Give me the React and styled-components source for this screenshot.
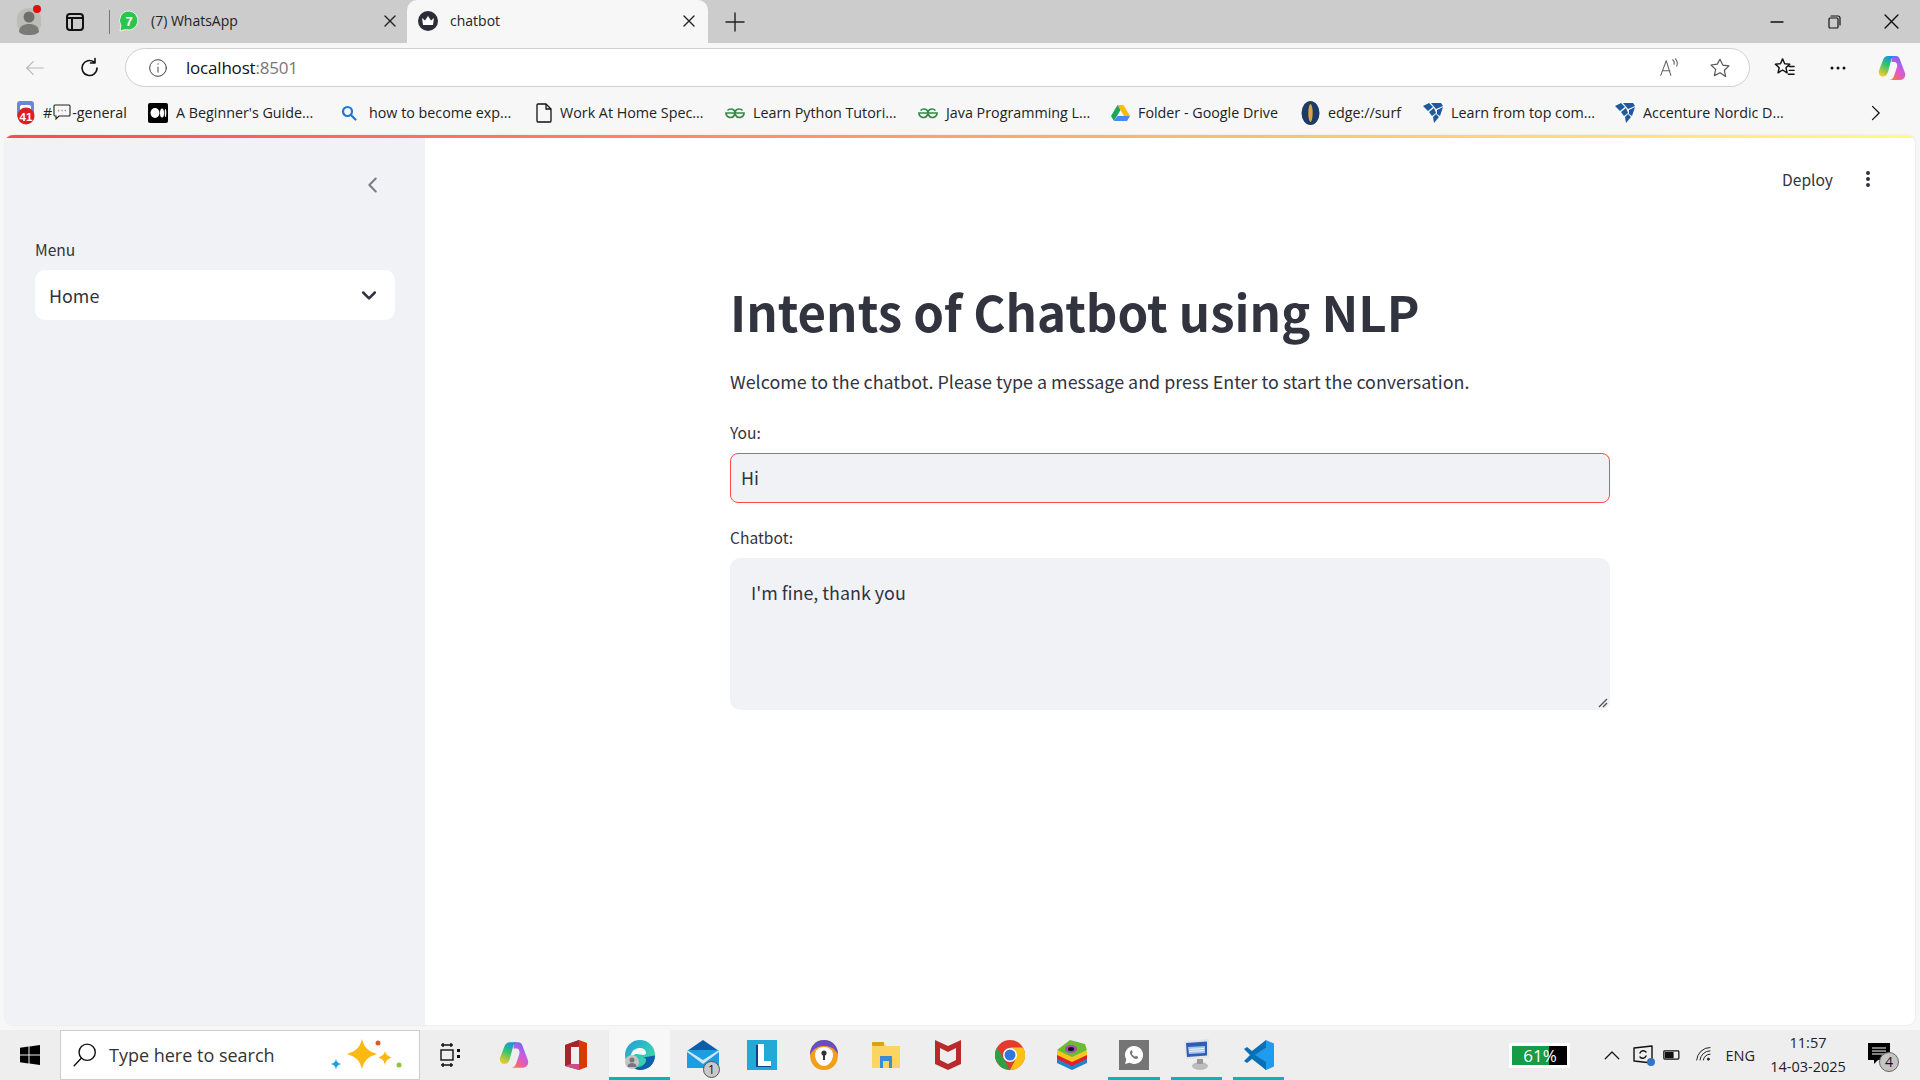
import React from 'react';
import styled, { createGlobalStyle } from 'styled-components';

const Global = createGlobalStyle`
  html, body { margin: 0; padding: 0; width: 1920px; height: 1080px; overflow: hidden; background: #f7f7f7; }
  * { box-sizing: border-box; }
`;
const UI = '"Open Sans", "Noto Sans", sans-serif';
const ST = '"Noto Sans CJK SC", "Noto Sans", sans-serif';

const Page = styled.div`
  width: 1920px; height: 1080px; display: flex; flex-direction: column; background: #f7f7f7; font-family: ${UI};
`;
const TitleBar = styled.div`
  height: 43px; flex: none; background: #cccccc; display: flex; align-items: stretch; padding-left: 17px;
`;
const ProfileSlot = styled.div`
  position: relative; width: 24px; display: flex; align-items: center; margin-top: -2px;
`;
const RedDot = styled.span`
  position: absolute; left: 16px; top: 7px; width: 8px; height: 8px; border-radius: 50%; background: #e30f0f;
`;
const TabsIcon = styled.div`
  width: 24px; margin-left: 22px; display: flex; align-items: center; justify-content: center;
`;
const TabDivider = styled.div`
  width: 1px; height: 24px; align-self: center; background: #777; margin-left: 22px;
`;
const Tab = styled.div`
  width: ${p => p.$w}px; height: 43px; display: flex; align-items: center;
  padding: 0 ${p => p.$pr}px 2px ${p => p.$pl}px; font-size: 14px; color: #222; gap: ${p => p.$gap}px;
  background: ${p => (p.$active ? '#f7f7f7' : 'transparent')};
  border-radius: ${p => (p.$active ? '10px 10px 0 0' : '0')};
`;
const TabLabel = styled.span` flex: 1; white-space: nowrap; `;
const PlusSlot = styled.div`
  margin-left: 15px; width: 24px; display: flex; align-items: center; justify-content: center;
`;
const WinControls = styled.div`
  margin-left: auto; display: flex; align-items: center; padding-right: 21px; gap: 43px;
`;
const Toolbar = styled.div`
  height: 45px; flex: none; display: flex; align-items: center; padding: 4px 14px 0 24px; background: #f7f7f7;
`;
const NavIcon = styled.div`
  width: ${p => p.$w}px; margin-left: ${p => p.$ml || 0}px; display: flex; justify-content: center; align-items: center;
`;
const Address = styled.div`
  width: 1625px; height: 39px; margin-left: 23px; flex: none; border: 1.5px solid #d0d0d0; border-radius: 20px;
  background: #fff; display: flex; align-items: center; padding: 0 18px 0 22px;
`;
const Url = styled.span`
  font-size: 17px; color: #111; margin-left: 18px; letter-spacing: -0.2px;
  & > span { color: #777; }
`;
const AddrRight = styled.div`
  margin-left: auto; display: flex; align-items: center; gap: 29px;
`;
const Bookmarks = styled.div`
  height: 47px; flex: none; display: flex; align-items: center; padding: 2px 0 0 16px; background: #f7f7f7;
`;
const Bookmark = styled.div`
  width: ${p => p.$w}px; flex: none; display: flex; align-items: center; gap: ${p => p.$gap || 8}px;
  font-size: 14.3px; color: #222; white-space: nowrap;
`;
const Inline = styled.span` display: inline-flex; align-items: center; gap: 1px; `;
const BmChevron = styled.div`
  margin-left: auto; margin-right: 35px; display: flex;
`;
const Win = styled.div`
  flex: 1; min-height: 0; margin: 0 5px 5px 5px; display: flex; flex-direction: column; background: #fff;
  border-radius: 8px; overflow: hidden; font-family: ${ST};
  box-shadow: 0 0 2px rgba(0,0,0,.12);
`;
const DecoLine = styled.div`
  height: 3px; flex: none; background: linear-gradient(90deg, #ff4b4b, #fffd80);
`;
const WinBody = styled.div` flex: 1; display: flex; min-height: 0; `;
const Sidebar = styled.aside`
  width: 420px; flex: none; background: #f0f2f6; padding: 30px 30px 0 30px; display: flex; flex-direction: column;
`;
const CollapseRow = styled.div`
  display: flex; justify-content: flex-end; height: 34px; align-items: center; margin-right: 11px;
`;
const FieldLabel = styled.label`
  display: block; font-size: 15.6px; line-height: 24px; color: #31333f;
`;
const SideField = styled.div` margin-top: 35px; display: flex; flex-direction: column; gap: 9px; `;
const Select = styled.div`
  width: 360px; height: 50px; background: #fff; border-radius: 10px; display: flex; align-items: center;
  justify-content: space-between; padding: 0 16px 0 14px; color: #31333f; font-size: 17.9px;
`;
const Main = styled.main`
  flex: 1; display: flex; flex-direction: column; position: relative;
`;
const TopRight = styled.div`
  display: flex; justify-content: flex-end; align-items: center; height: 34px; margin-top: 24px; padding-right: 44px; gap: 32px;
  font-size: 15.6px; color: #31333f;
`;
const Content = styled.div`
  width: 880px; margin-left: 305px; display: flex; flex-direction: column; margin-top: 80px;
`;
const Title = styled.h1`
  margin: 0; font-size: 49.2px; line-height: 70px; font-weight: 700; color: #31333f; white-space: nowrap;
`;
const Lead = styled.p`
  margin: 20px 0 0; font-size: 17.9px; line-height: 30px; color: #31333f;
`;
const Field = styled.div`
  margin-top: ${p => p.$mt}px; display: flex; flex-direction: column; gap: 9px;
`;
const Input = styled.div`
  height: 50px; background: #f0f2f6; border: 1px solid #ff4b4b; border-radius: 8px; display: flex; align-items: center;
  padding: 0 10px 2px; font-size: 17.9px; color: #31333f;
`;
const TextArea = styled.div`
  position: relative; height: 152px; background: #f0f2f6; border-radius: 10px; padding: 20px 21px; font-size: 17.9px;
  line-height: 28px; color: #31333f;
`;
const Grip = styled.svg`
  position: absolute; right: 2px; bottom: 2px;
`;
const Taskbar = styled.div`
  height: 50px; flex: none; background: #eeeeee; display: flex; align-items: stretch; font-family: ${UI};
`;
const StartBtn = styled.div`
  width: 60px; display: flex; align-items: center; justify-content: center;
`;
const Search = styled.div`
  width: 360px; background: #fff; border: 1px solid #cfcfcf; display: flex; align-items: center; padding: 0 10px 0 11px;
  font-size: 18px; color: #333; gap: 11px; position: relative;
`;
const SearchText = styled.span` flex: 1; `;
const TaskIcons = styled.div` display: flex; align-items: stretch; `;
const TaskSlot = styled.div`
  width: ${p => p.$w}px; margin-left: ${p => p.$ml || 0}px; flex: none; display: flex; align-items: center; justify-content: center;
  position: relative; background: ${p => (p.$hl ? '#f7f7f7' : 'transparent')};
  border-bottom: ${p => (p.$run ? '3px solid #00b4c4' : '0')};
  padding-top: ${p => (p.$run ? '3px' : '0')};
`;
const Count = styled.span`
  position: absolute; right: 1px; bottom: 2px; width: 17px; height: 17px; border-radius: 50%; border: 1px solid #555;
  background: #c9c9c9; color: #111; font-size: 12px; line-height: 15px; text-align: center;
`;
const Tray = styled.div`
  margin-left: auto; display: flex; align-items: center; padding-right: 22px;
`;
const Meter = styled.div`
  width: 61px; height: 25px; background: #fff; padding: 3px; margin-right: 33px;
`;
const MeterInner = styled.div`
  height: 100%; background: #000; position: relative; color: #fff; font-size: 17px; line-height: 19px; text-align: center;
`;
const MeterFill = styled.div`
  position: absolute; inset: 0 auto 0 0; background: #169c46;
`;
const MeterText = styled.span` position: relative; `;
const Lang = styled.span` font-size: 14.5px; color: #222; margin-left: 10px; `;
const Clock = styled.div`
  margin-left: 9px; width: 88px; text-align: center; font-size: 14.5px; line-height: 24px; color: #222;
`;
const Notif = styled.div`
  position: relative; width: 30px; height: 30px; margin-left: 16px;
`;
const NotifBadge = styled.span`
  position: absolute; right: -1px; bottom: -2px; width: 20px; height: 20px; border-radius: 50%; background: #c4c4c4;
  border: 1px solid #666; color: #111; font-size: 14px; line-height: 18px; text-align: center;
`;

const Stroke = ({ size = 20, w = 1.5, color = '#222', vb = 24, children }) => (
  <svg width={size} height={size} viewBox={`0 0 ${vb} ${vb}`} fill="none" stroke={color} strokeWidth={w} strokeLinecap="round" strokeLinejoin="round">{children}</svg>
);
const X = ({ size = 14 }) => <Stroke size={size} w={1.4} vb={14}><path d="M2 2 12 12M12 2 2 12" /></Stroke>;

const Avatar = () => (
  <svg width="24" height="30" viewBox="0 0 24 30"><circle cx="12" cy="15" r="13" fill="#bdbdb8" /><circle cx="12" cy="11" r="5.5" fill="#6e6e6a" /><path d="M2 26c0-6 5-8 10-8s10 2 10 8c-3 3-7 3-10 3s-7 0-10-3z" fill="#7a7a76" /></svg>
);
const TabsGlyph = () => (
  <svg width="18" height="18" viewBox="0 0 18 18" fill="none" stroke="#111" strokeWidth="2"><rect x="1" y="1" width="16" height="16" rx="3" /><path d="M1 5h16M6 5v12" /></svg>
);
const WaBadge = () => (
  <svg width="20" height="22" viewBox="0 0 20 22"><path d="M10 1a9.5 9.5 0 0 0-8 14.6L1 21l5.400-1.500A9.500 9.500 0 1 0 10 1z" fill="#2bc54d" stroke="#fff" strokeWidth=".8" /><text x="10" y="15.500" fontSize="13" fontWeight="700" fill="#fff" textAnchor="middle" fontFamily="Liberation Sans">7</text></svg>
);
const StCrown = () => (
  <svg width="20" height="20" viewBox="0 0 20 20"><circle cx="10" cy="10" r="10" fill="#2c2c36" /><path d="M4 7l3 2.500L10 5l3 4.500L16 7l-1 7H5z" fill="#fff" /></svg>
);
const Discord = () => (
  <svg width="20" height="24" viewBox="0 0 20 24"><rect x="1" y="0" width="17" height="17" rx="3" fill="#6d86d8" /><rect x="4" y="4" width="11" height="6" rx="2" fill="#fff" /><circle cx="10" cy="15" r="8.500" fill="#e01b24" /><text x="10" y="19.500" fontSize="11.500" fontWeight="700" fill="#fff" textAnchor="middle" fontFamily="Liberation Sans">41</text></svg>
);
const Bubble = () => (
  <svg width="18" height="17" viewBox="0 0 18 17" fill="none" stroke="#222" strokeWidth="1.100"><path d="M2 1h14a1 1 0 0 1 1 1v9a1 1 0 0 1-1 1H6l-3 3v-3H2a1 1 0 0 1-1-1V2a1 1 0 0 1 1-1z" /><path d="M5.500 6.500h.6M8.700 6.500h.6M11.900 6.500h.6" strokeWidth="1.500" /></svg>
);
const Medium = () => (
  <svg width="20" height="20" viewBox="0 0 20 20"><rect width="20" height="20" rx="2" fill="#000" /><ellipse cx="7" cy="10" rx="4.500" ry="5" fill="#fff" /><ellipse cx="14" cy="10" rx="2" ry="4.500" fill="#fff" /><ellipse cx="17.500" cy="10" rx=".8" ry="4" fill="#fff" /></svg>
);
const SearchBm = () => (
  <svg width="16" height="16" viewBox="0 0 16 16" fill="none" stroke="#1c78d2" strokeWidth="2.200" strokeLinecap="round"><circle cx="6.500" cy="6.500" r="4.500" /><path d="M10 10l4.500 4.500" /></svg>
);
const Doc = () => (
  <svg width="16" height="20" viewBox="0 0 16 20" fill="none" stroke="#111" strokeWidth="1.300" strokeLinejoin="round"><path d="M1 2a1 1 0 0 1 1-1h8l5 5v12a1 1 0 0 1-1 1H2a1 1 0 0 1-1-1z" /><path d="M10 1v5h5" /></svg>
);
const Gfg = () => (
  <svg width="20" height="14" viewBox="0 0 20 14" fill="none" stroke="#2f8d46" strokeWidth="1.700"><path d="M10 7h9a4.500 4.500 0 0 1-8.500 2c-1-2-.5-6 3.500-6 1.500 0 2.500.5 3.500 1.500" /><path d="M10 7H1a4.500 4.500 0 0 0 8.500 2c1-2 .5-6-3.500-6-1.500 0-2.500.5-3.500 1.500" /></svg>
);
const Drive = () => (
  <svg width="19" height="18" viewBox="0 0 19 18"><path d="M6.500 1h6L19 12h-6z" fill="#fbbc04" /><path d="M6.500 1 0 12l3 5 6.500-11z" fill="#1ea362" /><path d="M3 17h13l3-5H6.500z" fill="#4688f4" /></svg>
);
const EdgeSurf = () => (
  <svg width="19" height="24" viewBox="0 0 19 24"><ellipse cx="9.500" cy="12" rx="9" ry="12" fill="#1e3a66" /><ellipse cx="9.500" cy="12" rx="2.200" ry="9" fill="#d9a441" /></svg>
);
const Accent = () => (
  <svg width="20" height="22" viewBox="0 0 20 22" fill="#1d5a9c"><path d="M0 4 6 1l4 4-5 4zM8 1h10l2 3-7 3zM6 10l5-4 2 5-4 3zM14 8l6-3-3 9-3-2zM10 15l3-3 3 3-5 6z" /></svg>
);
const Copilot = ({ w = 28, h = 26, id }) => (
  <svg width={w} height={h} viewBox="0 0 28 26" fill="none">
    <defs>
      <linearGradient id={`${id}a`} x1="0.700" y1="0" x2="0.300" y2="1"><stop offset="0" stopColor="#1a8fe8" /><stop offset=".45" stopColor="#2fc46e" /><stop offset="1" stopColor="#f7c92c" /></linearGradient>
      <linearGradient id={`${id}b`} x1="0.800" y1="0" x2="0.300" y2="1"><stop offset="0" stopColor="#5a6cf0" /><stop offset=".45" stopColor="#c65ce6" /><stop offset=".8" stopColor="#ee5f9e" /><stop offset="1" stopColor="#f5822a" /></linearGradient>
    </defs>
    <path d="M14 1h4c2 0 3 1 3.700 3L27 18c1 3.500-1 7-5 7H11c2.500 0 4-1.500 5-4l3-9c.7-2.500-.5-5-2.500-5h-3z" fill={`url(#${id}b)`} />
    <path d="M10 1h7c-2 .3-3 1.500-3.700 3.500L10 17c-.8 2.500-2.500 4.500-5 4.500C2 21.500 0 19 1 15.500L5 5c1-2.500 2.500-4 5-4z" fill={`url(#${id}a)`} />
  </svg>
);
const WinLogo = () => (
  <svg width="20" height="20" viewBox="0 0 20 20" fill="#000"><path d="M0 2.800 8.500 1.600V9.500H0zM9.500 1.500 20 0V9.500H9.500zM0 10.500h8.500v8L0 17.200zM9.500 10.500H20V20L9.500 18.600z" /></svg>
);
const Sparkles = () => (
  <svg width="80" height="40" viewBox="0 0 80 40" style={{ position: 'absolute', right: 10, top: 6 }}>
    <path d="M33 2c2.500 9 6 12 15 15-9 3-12.500 6-15 15-2.500-9-6-12-15-15 9-3 12.500-6 15-15z" fill="#fdb913" />
    <path d="M56 14c1 3.500 2.500 5 7 6.500-4.500 1.500-6 3-7 7.500-1-4.500-2.500-6-7-7.500 4.500-1.500 6-3 7-6.500z" fill="#fdb913" />
    <path d="M7 22c.8 3 1.800 4 5 5-3.200 1-4.200 2-5 5.500-.8-3.500-1.800-4.500-5-5.500 3.200-1 4.200-2 5-5z" fill="#1d9be8" />
    <circle cx="49" cy="6" r="2.500" fill="#e2582b" /><circle cx="70" cy="28" r="2.500" fill="#8cc63f" />
  </svg>
);
const TaskView = () => (
  <svg width="20" height="26" viewBox="0 0 20 26" fill="none" stroke="#111" strokeWidth="1.400"><path d="M1 3h12M1 23h12M3 1v4M11 1v4M3 21v4M11 21v4" /><rect x="1" y="8" width="12" height="10" /><rect x="17" y="7" width="3" height="3" fill="#111" stroke="none" /><rect x="17" y="13" width="3" height="3" fill="#111" stroke="none" /></svg>
);
const Office = () => (
  <svg width="22" height="30" viewBox="0 0 22 30"><path d="M14 0 22 3v24l-8 3-14-4V5z" fill="#d83b01" /><path d="M14 0 0 5v21l6-2V8l8-2z" fill="#a4262c" /><path d="M14 30V23l-8 1-6 2z" fill="#c94f8a" /><rect x="6" y="7" width="8" height="17" fill="#f0f0f0" /></svg>
);
const Edge = () => (
  <svg width="30" height="30" viewBox="0 0 30 30">
    <defs><linearGradient id="eg" x1="0" y1="0" x2="1" y2="1"><stop offset="0" stopColor="#2298dc" /><stop offset=".6" stopColor="#34cdb8" /><stop offset="1" stopColor="#57d85f" /></linearGradient></defs>
    <circle cx="15" cy="15" r="15" fill="url(#eg)" />
    <path d="M30 15.500c0 9-7 14.500-15 14.500-3 0-5-1-6-3 6 1 11-2 12-6 .6-2-1-3.500-3-3.500z" fill="#0f5fb0" />
    <path d="M6 15c1-5 5-7 9-7 4 0 6 2.500 6 5 0 1.200-1 2-3 2-1.500 0-4-1-6-1-3 0-5 2-6 5z" fill="#f7f7f7" />
    <circle cx="7" cy="22" r="7" fill="#c4c4c4" /><circle cx="7" cy="20" r="2.500" fill="#777" /><path d="M2.500 27c0-3 2-4 4.500-4s4.500 1 4.500 4z" fill="#777" />
  </svg>
);
const Mail = () => (
  <svg width="32" height="30" viewBox="0 0 32 30"><path d="M16 0 32 11H0z" fill="#0a5fa8" /><rect x="0" y="10" width="32" height="18" fill="#1b9de2" /><path d="M0 10l16 10 16-10v2L16 24 0 12z" fill="#cfe8f7" /></svg>
);
const LApp = () => (
  <svg width="30" height="30" viewBox="0 0 30 30"><rect width="30" height="30" fill="#22a9d6" /><path d="M11 4h6v17h7v5H11z" fill="#fff" /><path d="M9 5h2v21h13v1H9z" fill="#123f8a" /></svg>
);
const Avast = () => (
  <svg width="28" height="30" viewBox="0 0 28 30"><path d="M14 0c8 0 14 6 14 15S22 30 14 30 0 24 0 15 6 0 14 0z" fill="#f59e1b" /><path d="M14 0c8 0 14 6 14 14-4-6-8-8-14-8S4 8 0 15C0 6 6 0 14 0z" fill="#6a4cc7" /><path d="M5 15c0-5 4-8 9-8s9 3 9 8-4 11-9 11-9-6-9-11z" fill="#fff" /><circle cx="14" cy="13" r="2.600" fill="#333" /><rect x="13" y="14" width="2" height="6" fill="#333" /></svg>
);
const Explorer = () => (
  <svg width="28" height="26" viewBox="0 0 28 26"><path d="M0 1h12l2 3h14v22H0z" fill="#fcd462" /><rect x="0" y="0" width="12" height="4" rx="1" fill="#d8a31a" /><path d="M8 14h12v12h-3v-7h-6v7H8z" fill="#3b8bd9" /></svg>
);
const McAfee = () => (
  <svg width="26" height="30" viewBox="0 0 26 30"><path d="M0 0l13 6 13-6v24l-13 6-13-6z" fill="#b92b2b" /><path d="M5 8l8 4 8-4v12l-8 4-8-4z" fill="#eee" /></svg>
);
const Chrome = () => (
  <svg width="30" height="30" viewBox="0 0 30 30"><circle cx="15" cy="15" r="15" fill="#e53a2e" /><path d="M15 30A15 15 0 0 1 2 7.500L9 19l6 11z" fill="#2f9e44" /><path d="M15 30a15 15 0 0 0 13-22.500H15l6 11z" fill="#fbc116" /><circle cx="15" cy="15" r="7" fill="#fff" /><circle cx="15" cy="15" r="5.500" fill="#2f78e0" /></svg>
);
const Blue = () => (
  <svg width="30" height="30" viewBox="0 0 30 30"><path d="M15 12 30 18v5L15 30 0 23v-5z" fill="#1b86c9" /><path d="M15 8 30 14v5l-15 7L0 19v-5z" fill="#e2202c" /><path d="M15 5 30 11v4l-15 7L0 15v-4z" fill="#f6c81e" /><path d="M13 0 28 4l2 6-15 7L0 10z" fill="#6dbb35" /><ellipse cx="14" cy="9" rx="6" ry="4" fill="#a34bb6" /><ellipse cx="14" cy="9" rx="3" ry="2" fill="#111" /></svg>
);
const WaTask = () => (
  <svg width="30" height="30" viewBox="0 0 30 30"><rect width="30" height="30" fill="#757575" /><path d="M15 6a9 9 0 0 0-7.700 13.600L6 24l4.600-1.200A9 9 0 1 0 15 6z" fill="#fff" /><path d="M12 10.500c-1.500 1-1.500 3 .5 5.500s4.500 3.500 6 2.500l.7-1.500-2.200-1.200-1 1c-1.500-.7-2.500-1.700-3.200-3.200l1-1-1-2.400z" fill="#757575" /></svg>
);
const Desktop = () => (
  <svg width="30" height="32" viewBox="0 0 30 32"><path d="M2 2 27 0v19L4 20z" fill="#e4e4e4" /><path d="M4 4 25 2.500v14L5 18z" fill="#2d5fb8" /><path d="M6 8l17-1v7L7 15z" fill="#a8c4ea" /><path d="M7 10.500l15-1M7 12.500l15-1" stroke="#fff" strokeWidth=".8" /><ellipse cx="18" cy="27" rx="8" ry="4" fill="#bdbdbd" /><rect x="15" y="20" width="6" height="5" fill="#999" /></svg>
);
const VSCode = () => (
  <svg width="30" height="30" viewBox="0 0 30 30"><path d="M22 0 30 3.500v23L22 30 8 16.500 22 8z" fill="#1f9cf0" /><path d="M22 0v8L11 15l11 7v8L8 19 3 23 0 21l6-6-6-6 3-2 5 4z" fill="#0a6fb5" /></svg>
);

const App = () => (
  <Page>
    <Global />
    <TitleBar>
      <ProfileSlot><Avatar /><RedDot /></ProfileSlot>
      <TabsIcon><TabsGlyph /></TabsIcon>
      <TabDivider />
      <Tab $w={297} $pl={9} $pr={10} $gap={12}>
        <WaBadge /><TabLabel>(7) WhatsApp</TabLabel><X />
      </Tab>
      <Tab $active $w={301} $pl={11} $pr={12} $gap={12}>
        <StCrown /><TabLabel>chatbot</TabLabel><X />
      </Tab>
      <PlusSlot><Stroke size={22} w={1.4} vb={22}><path d="M11 2v18M2 11h18" /></Stroke></PlusSlot>
      <WinControls>
        <Stroke size={14} w={1.3} vb={14} color="#111"><path d="M1 7h12" /></Stroke>
        <Stroke size={14} w={1.2} vb={14} color="#111"><rect x="2" y="3" width="9" height="10" rx="1" /><path d="M4 1h7a2 2 0 0 1 2 2v7" /></Stroke>
        <Stroke size={15} w={1.3} vb={14} color="#111"><path d="M1 1l12 12M13 1 1 13" /></Stroke>
      </WinControls>
    </TitleBar>
    <Toolbar>
      <NavIcon $w={22}><Stroke size={22} w={1.3} color="#b9b9b9"><path d="M21 12H3M10 5l-7 7 7 7" /></Stroke></NavIcon>
      <NavIcon $w={24} $ml={32}><Stroke size={24} w={1.6} color="#111"><path d="M19 12a7.500 7.500 0 1 1-3-6M17 2.500V7h-4.500" /></Stroke></NavIcon>
      <Address>
        <Stroke size={20} w={1.2} color="#444"><circle cx="12" cy="12" r="10" /><path d="M12 11v6M12 7v.5" /></Stroke>
        <Url>localhost<span>:8501</span></Url>
        <AddrRight>
          <Stroke size={22} w={1.2} color="#666"><path d="M3 20 9 4l5 16M5 15h8M16 3c1.500 1 2 3 1.500 5M19 2c2 2 2.500 5 1.500 8" /></Stroke>
          <Stroke size={22} w={1.3} color="#555"><path d="M12 2.500l3 6.300 6.800.9-5 4.800 1.300 6.800L12 17.100 5.900 20.300l1.300-6.800-5-4.800 6.800-.9z" /></Stroke>
        </AddrRight>
      </Address>
      <NavIcon $w={24} $ml={23}><Stroke size={23} w={1.5} color="#111"><path d="M10 3l2.200 5 5.300.5-4 3.700 1.200 5.300L10 14.600 5.300 17.500l1.200-5.300-4-3.700L7.800 8zM17 11h5M17 15h5M16 19h6" /></Stroke></NavIcon>
      <NavIcon $w={24} $ml={30}><svg width="16" height="4" viewBox="0 0 16 4" fill="#111"><circle cx="2" cy="2" r="1.500" /><circle cx="8" cy="2" r="1.500" /><circle cx="14" cy="2" r="1.500" /></svg></NavIcon>
      <NavIcon $w={28} $ml={28}><Copilot id="cptop" /></NavIcon>
    </Toolbar>
    <Bookmarks>
      <Bookmark $w={132} $gap={7}><Discord /><Inline>#<Bubble />-general</Inline></Bookmark>
      <Bookmark $w={193}><Medium /><span>A Beginner's Guide...</span></Bookmark>
      <Bookmark $w={195} $gap={12}><SearchBm /><span>how to become exp...</span></Bookmark>
      <Bookmark $w={189} $gap={8}><Doc /><span>Work At Home Spec...</span></Bookmark>
      <Bookmark $w={193}><Gfg /><span>Learn Python Tutori...</span></Bookmark>
      <Bookmark $w={193}><Gfg /><span>Java Programming L...</span></Bookmark>
      <Bookmark $w={190}><Drive /><span>Folder - Google Drive</span></Bookmark>
      <Bookmark $w={122}><EdgeSurf /><span>edge://surf</span></Bookmark>
      <Bookmark $w={192}><Accent /><span>Learn from top com...</span></Bookmark>
      <Bookmark $w={192}><Accent /><span>Accenture Nordic D...</span></Bookmark>
      <BmChevron><Stroke size={20} w={1.5} color="#111"><path d="M9 4l8 8-8 8" /></Stroke></BmChevron>
    </Bookmarks>
    <Win>
      <DecoLine />
      <WinBody>
        <Sidebar>
          <CollapseRow><Stroke size={22} w={2.2} color="#7a7c85"><path d="M15 5l-7 7 7 7" /></Stroke></CollapseRow>
          <SideField>
            <FieldLabel>Menu</FieldLabel>
            <Select><span>Home</span><Stroke size={20} w={3} color="#31333f"><path d="M5 9l7 7 7-7" /></Stroke></Select>
          </SideField>
        </Sidebar>
        <Main>
          <TopRight>
            <span>Deploy</span>
            <svg width="6" height="18" viewBox="0 0 6 18" fill="#31333f"><circle cx="3" cy="3" r="2" /><circle cx="3" cy="9" r="2" /><circle cx="3" cy="15" r="2" /></svg>
          </TopRight>
          <Content>
            <Title>Intents of Chatbot using NLP</Title>
            <Lead>Welcome to the chatbot. Please type a message and press Enter to start the conversation.</Lead>
            <Field $mt={24}>
              <FieldLabel>You:</FieldLabel>
              <Input>Hi</Input>
            </Field>
            <Field $mt={22}>
              <FieldLabel>Chatbot:</FieldLabel>
              <TextArea>
                I'm fine, thank you
                <Grip width="10" height="10" viewBox="0 0 10 10" stroke="#555" strokeWidth="1.400"><path d="M9 1 1 9M9 5 5 9" /></Grip>
              </TextArea>
            </Field>
          </Content>
        </Main>
      </WinBody>
    </Win>
    <Taskbar>
      <StartBtn><WinLogo /></StartBtn>
      <Search>
        <Stroke size={26} w={1.3} color="#111"><circle cx="14" cy="9.500" r="7.500" /><path d="M8.500 15 2 22" /></Stroke>
        <SearchText>Type here to search</SearchText>
        <Sparkles />
      </Search>
      <TaskIcons>
        <TaskSlot $w={20} $ml={20}><TaskView /></TaskSlot>
        <TaskSlot $w={30} $ml={39}><Copilot id="cptask" w={30} h={28} /></TaskSlot>
        <TaskSlot $w={22} $ml={36}><Office /></TaskSlot>
        <TaskSlot $w={61} $ml={22} $hl $run><Edge /></TaskSlot>
        <TaskSlot $w={36} $ml={15}><Mail /><Count>1</Count></TaskSlot>
        <TaskSlot $w={30} $ml={26}><LApp /></TaskSlot>
        <TaskSlot $w={30} $ml={32}><Avast /></TaskSlot>
        <TaskSlot $w={30} $ml={32}><Explorer /></TaskSlot>
        <TaskSlot $w={30} $ml={32}><McAfee /></TaskSlot>
        <TaskSlot $w={30} $ml={32}><Chrome /></TaskSlot>
        <TaskSlot $w={30} $ml={32}><Blue /></TaskSlot>
        <TaskSlot $w={52} $ml={21} $run><WaTask /></TaskSlot>
        <TaskSlot $w={51} $ml={11} $run><Desktop /></TaskSlot>
        <TaskSlot $w={51} $ml={11} $run><VSCode /></TaskSlot>
      </TaskIcons>
      <Tray>
        <Meter><MeterInner><MeterFill style={{ width: '66%' }} /><MeterText>61%</MeterText></MeterInner></Meter>
        <Stroke size={18} w={1.6} color="#111"><path d="M3 17l9-9 9 9" /></Stroke>
        <NavIcon $w={24} $ml={11}><Stroke size={24} w={1.4} color="#111"><path d="M2 5l18-2v17l-18-2z" /><path d="M8 10a3.500 3.500 0 0 1 6-1M14 13a3.500 3.500 0 0 1-6 1" /><circle cx="19" cy="19" r="4" fill="#2f76c8" stroke="none" /></Stroke></NavIcon>
        <NavIcon $w={20} $ml={7}><Stroke size={20} w={1.5} color="#111"><rect x="1" y="7" width="18" height="10" rx="1" /><rect x="3" y="9" width="9" height="6" fill="#111" /></Stroke></NavIcon>
        <NavIcon $w={20} $ml={12}><Stroke size={20} w={1.2} color="#222"><path d="M2 18A16 16 0 0 1 18 3M6 18A12 12 0 0 1 18 7M10 18a8 8 0 0 1 8-7" /><circle cx="16" cy="17" r="1.200" fill="#222" /></Stroke></NavIcon>
        <Lang>ENG</Lang>
        <Clock>11:57<br />14-03-2025</Clock>
        <Notif>
          <svg width="22" height="22" viewBox="0 0 22 22" fill="#000" style={{ marginTop: 3 }}><path d="M0 0h22v17H10l-4 4v-4H0z" /><path d="M4 5h14M4 8h14M4 11h14" stroke="#fff" /></svg>
          <NotifBadge>4</NotifBadge>
        </Notif>
      </Tray>
    </Taskbar>
  </Page>
);

export default App;
